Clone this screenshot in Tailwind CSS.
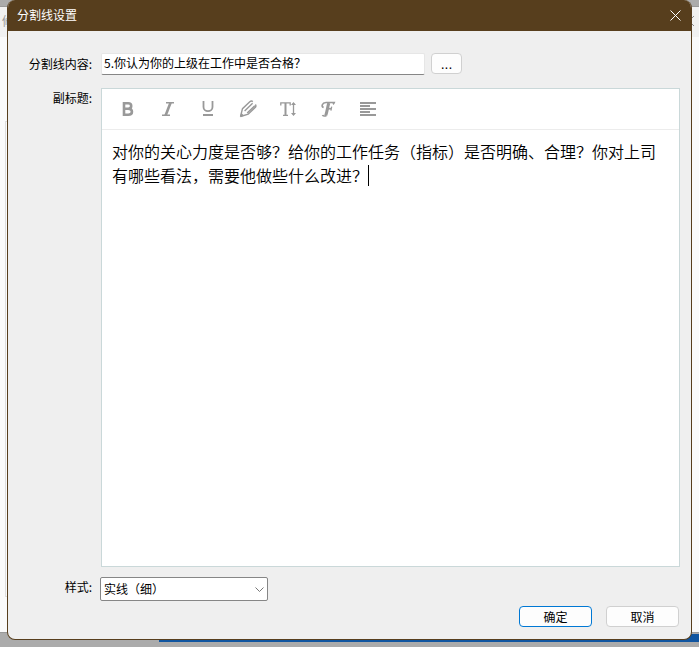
<!DOCTYPE html>
<html lang="zh-CN">
<head>
    <meta charset="UTF-8">
    <meta name="viewport" content="width=device-width, initial-scale=1.0">
    <title>分割线设置</title>
    <script src="https://cdn.jsdelivr.net/npm/@tailwindcss/browser@4"></script>
</head>
<body class="relative h-screen overflow-hidden bg-[#ababab] px-[7px] pb-[7px] font-['Noto_Sans_CJK_SC',sans-serif] text-xs text-black">
    <!-- Window behind the dialog -->
    <div class="absolute inset-x-0 top-[6px] bottom-[14px] border-y border-[#999] bg-[#fafafa]" aria-hidden="true">
        <div class="relative h-[30px] overflow-hidden bg-[#f1f1f1]">
            <span class="absolute top-[6px] left-[2px] text-[#999]">修</span>
            <svg class="absolute top-[9px] right-[5px] size-[10px]" viewBox="0 0 10 10" stroke="#888"><path d="M0 0L10 10M10 0L0 10"/></svg>
        </div>
        <div class="absolute top-[114px] bottom-[35px] left-[5px] w-[10px] border border-[#ddd]"></div>
    </div>
    <div class="absolute right-0 bottom-[5px] left-[159px] h-[3px] bg-[#1055a0]"></div>
    <div class="absolute right-0 bottom-[5px] h-2 w-[30px] bg-[#1055a0]"></div>

    <div role="dialog" aria-labelledby="title" class="relative flex h-full flex-col overflow-hidden rounded-lg border border-t-0 border-[#573e1d] bg-[#efefef]">
        <header class="flex h-[31px] shrink-0 items-center justify-between bg-[#573e1d] pr-[10px] pb-px pl-[9px] text-white">
            <h1 id="title">分割线设置</h1>
            <button type="button" aria-label="关闭">
                <svg class="size-[11px]" viewBox="0 0 11 11" fill="none" stroke="#fff"><path d="M.5.5l10 10M10.5.5l-10 10"/></svg>
            </button>
        </header>

        <form class="flex min-h-0 flex-1 flex-col pt-[22px] pr-[11px] pb-3">
            <div class="grid min-h-0 flex-1 grid-cols-[84px_1fr] grid-rows-[auto_1fr_auto] gap-x-[9px]">
                <label for="content" class="pt-[3px] text-right">分割线内容:</label>
                <div class="mb-[13px] flex gap-[6px]">
                    <input id="content" type="text" value="5.你认为你的上级在工作中是否合格？" class="h-[22px] w-[324px] rounded-xs border border-[#e6e6e6] border-b-[#868686] bg-white px-[2px] pb-[4px] outline-none">
                    <button type="button" aria-label="更多" class="h-[21px] w-[31px] rounded border border-[#d0d0d0] bg-[#fdfdfd] font-['Liberation_Sans',sans-serif] text-sm leading-4">...</button>
                </div>

                <label for="subtitle" class="pt-[2px] text-right">副标题:</label>
                <div class="flex min-h-0 flex-col border border-[#cad8d9] bg-white">
                    <div class="flex h-[41px] shrink-0 items-center gap-5 border-b border-[#ececec] pl-4 text-[#999]">
                        <button type="button" aria-label="加粗" class="flex size-5 items-center justify-center">
                            <svg class="size-4" viewBox="0 0 16 16" fill="none" stroke="currentColor" stroke-width="2.6"><path d="M4 2.3h4.2c4 0 4 5.4 0 5.4H4M8.2 7.7c5 0 5 6 0 6H4V1"/></svg>
                        </button>
                        <button type="button" aria-label="斜体" class="flex size-5 items-center justify-center">
                            <svg class="size-4" viewBox="0 0 16 16" fill="none" stroke="currentColor"><path d="M6 1.7h8M2 14.3h8" stroke-width="1.4"/><path d="M10.6 1.5L5.6 14.5" stroke-width="2.6"/></svg>
                        </button>
                        <button type="button" aria-label="下划线" class="flex size-5 items-center justify-center">
                            <svg class="size-4" viewBox="0 0 16 16" fill="none" stroke="currentColor" stroke-width="1.8"><path d="M3.5 0v6c0 5.6 9 5.6 9 0V0M3 14h10"/></svg>
                        </button>
                        <button type="button" aria-label="颜色" class="flex size-5 items-center justify-center">
                            <svg class="size-[18px]" viewBox="0 0 18 18" fill="none" stroke="currentColor" stroke-width="1.4"><path d="M1.5 16.5l2-7.8L10.8 1.8c1-.9 2.2-.9 3-.2M1.5 16.5l7.7-2.3L16.4 7.2c.8-1 .6-1.8 0-2.7M5.6 11L13.6 3.2M8.2 13L15.8 5.7"/><path d="M1 17l1.3-4.2 2.9 2.9z" fill="currentColor" stroke="none"/></svg>
                        </button>
                        <button type="button" aria-label="字号" class="flex size-5 items-center justify-center">
                            <svg class="size-4" viewBox="0 0 16 16" fill="none" stroke="currentColor"><path d="M.8 4.5V1.8h9.4v2.7M3 14.3h5" stroke-width="1.3"/><path d="M5.5 2v12" stroke-width="2"/><path d="M13.5 2v12" stroke-width="1.3"/><path d="M13.5 1l2.5 3h-5zM13.5 15l2.5-3h-5z" fill="currentColor" stroke="none"/></svg>
                        </button>
                        <button type="button" aria-label="字体" class="flex size-5 items-center justify-center">
                            <svg class="size-4" viewBox="0 0 16 16" fill="none" stroke="currentColor"><path d="M3.6 6.5C1 5.5 2 1.6 6 1.5h8.3c-.3.9-.7 1.4-1.4 1.8" stroke-width="1.6"/><path d="M8.8 2C7.6 6 7.2 10 5.8 14.4" stroke-width="3"/><path d="M7.5 7.7h4" stroke-width="1.7"/><path d="M11.7 5.6l-.8 4" stroke-width="1.2"/><path d="M6.5 14.6c-1.6.7-3.6.6-4-.6" stroke-width="1.6"/></svg>
                        </button>
                        <button type="button" aria-label="对齐" class="flex size-5 items-center justify-center">
                            <svg class="size-4" viewBox="0 0 16 16" stroke="currentColor" stroke-width="2"><path d="M0 2h16M0 5h10M0 8h16M0 11h10M0 14h16"/></svg>
                        </button>
                    </div>
                    <div class="relative flex min-h-0 flex-1">
                        <textarea id="subtitle" class="flex-1 resize-none overflow-hidden px-[10px] py-[9px] text-base leading-6 font-[350] outline-none">对你的关心力度是否够？给你的工作任务（指标）是否明确、合理？你对上司有哪些看法，需要他做些什么改进？</textarea>
                        <span class="absolute top-[35px] left-[266px] h-[21px] w-px bg-black"></span>
                    </div>
                </div>

                <label for="style" class="pt-[12px] text-right">样式:</label>
                <div class="relative mt-[10px] -ml-px h-6 w-[168px]">
                    <select id="style" class="h-full w-full appearance-none rounded-xs border border-[#868686] bg-white pl-[3px] outline-none">
                        <option>实线（细）</option>
                    </select>
                    <svg class="pointer-events-none absolute top-[9px] right-1 h-[7px] w-[9px]" viewBox="0 0 9 7" fill="none" stroke="#777"><path d="M.5 1.5l4 4 4-4"/></svg>
                </div>
            </div>

            <div class="mt-[5px] flex justify-end gap-[14px] pr-px">
                <button type="submit" class="h-[21px] w-[73px] rounded border border-[#0078d4] bg-[#fdfdfd] leading-[18px]">确定</button>
                <button type="button" class="h-[21px] w-[73px] rounded border border-[#d0d0d0] bg-[#fdfdfd] leading-[18px]">取消</button>
            </div>
        </form>
    </div>
</body>
</html>
